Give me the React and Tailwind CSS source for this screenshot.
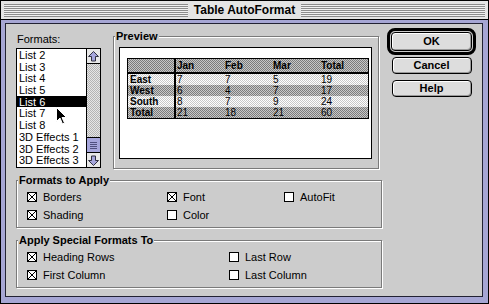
import React from 'react'

const darkDither = "bg-[image:repeating-conic-gradient(#7c7c7c_0%_25%,#c8c8c8_0%_50%)] bg-[length:2px_2px]"
const lightDither = "bg-[image:repeating-conic-gradient(#ffffff_0%_25%,#c8c8c8_0%_50%)] bg-[length:2px_2px]"
const trackDither = "bg-[image:repeating-conic-gradient(#b4b4b4_0%_25%,#e6e6e6_0%_50%)] bg-[length:2px_2px]"
const stripes = "bg-[image:repeating-linear-gradient(to_bottom,#8c8c8c_0px,#8c8c8c_1px,#f0f0f0_1px,#f0f0f0_2px)]"

const formats = ["List 2", "List 3", "List 4", "List 5", "List 6", "List 7", "List 8", "3D Effects 1", "3D Effects 2", "3D Effects 3"]

function ArrowBox({ down }) {
    return (
        <div className="h-[14px] bg-[#e8e8e8] flex items-center justify-center">
            <svg width="11" height="11" viewBox="0 0 11 11" className={down ? "rotate-180" : ""}>
                <path d="M5.5 0.5 L10.5 5.5 L7.5 5.5 L7.5 10 L3.5 10 L3.5 5.5 L0.5 5.5 Z" fill="#a6a6dc" stroke="#303040" strokeWidth="1" />
            </svg>
        </div>
    )
}

function Scrollbar() {
    return (
        <div className="w-[14px] border-l border-black flex flex-col">
            <ArrowBox />
            <div className={`flex-1 border-t border-black ${trackDither}`} />
            <div className="h-[16px] border-y border-black bg-[#a6a6dc] flex flex-col items-center justify-center gap-[1px]">
                <div className="w-[7px] h-px bg-[#505080]" />
                <div className="w-[7px] h-px bg-[#505080]" />
                <div className="w-[7px] h-px bg-[#505080]" />
                <div className="w-[7px] h-px bg-[#505080]" />
            </div>
            <ArrowBox down />
        </div>
    )
}

function FormatList() {
    return (
        <div className="relative w-[85px] h-[120px] border border-black bg-white flex">
            <div className="flex-1 overflow-hidden">
                {formats.map(f => (
                    <div key={f} className={`h-[11.7px] leading-[12px] pl-[2px] text-[11px] ${f === "List 6" ? "bg-black text-white" : ""}`}>{f}</div>
                ))}
            </div>
            <Scrollbar />
            {/* mouse pointer */}
            <svg className="absolute left-[39px] top-[58px]" width="12" height="18" viewBox="0 0 12 18">
                <path d="M0.5 0.5 L0.5 14.5 L4 11 L6.5 17 L8.5 16 L6 10.5 L10.5 10.5 Z" fill="#000" stroke="#fff" strokeWidth="1" />
            </svg>
        </div>
    )
}

function PreviewTable() {
    const head = ["Jan", "Feb", "Mar", "Total"]
    const rows = [
        ["East", "7", "7", "5", "19"],
        ["West", "6", "4", "7", "17"],
        ["South", "8", "7", "9", "24"],
        ["Total", "21", "18", "21", "60"],
    ]
    return (
        <div className="w-[242px] border border-black text-[10px] text-black">
            <div className={`flex h-[15px] border-b-2 border-black ${darkDither}`}>
                <div className="w-[48px] border-r-2 border-black" />
                {head.map(h => <div key={h} className="w-[48px] pl-[1px] leading-[13px] font-bold">{h}</div>)}
            </div>
            {rows.map((r, i) => (
                <div key={r[0]} className={`flex h-[11px] leading-[12px] ${i % 2 ? darkDither : lightDither}`}>
                    <div className="w-[48px] border-r-2 border-black pl-[2px] font-bold">{r[0]}</div>
                    {r.slice(1).map((c, j) => <div key={j} className="w-[48px] pl-[1px]">{c}</div>)}
                </div>
            ))}
        </div>
    )
}

function Group({ label, className, children }) {
    return (
        <div className={`relative border border-[#7a7a7a] shadow-[inset_1px_1px_0_#ffffff,1px_1px_0_#ffffff] ${className}`}>
            <div className="absolute left-[1px] top-[-7px] px-px bg-[#cccccc] text-[11px] leading-[12px] font-bold">{label}</div>
            {children}
        </div>
    )
}

function Check({ checked, label }) {
    return (
        <div className="flex items-center h-[12px]">
            <div className="w-[10px] h-[10px] border border-black bg-white">
                {checked && (
                    <svg width="8" height="8" viewBox="0 0 8 8">
                        <path d="M0 0 L8 8 M8 0 L0 8" stroke="#000" strokeWidth="1" />
                    </svg>
                )}
            </div>
            <span className="ml-[6px] text-[11px] leading-[12px]">{label}</span>
        </div>
    )
}

function Btn({ label, className }) {
    return (
        <div className={`border border-black rounded-[4px] bg-[#dddddd] shadow-[inset_1px_1px_0_#ffffff,inset_-1px_-1px_0_#999999] flex items-center justify-center text-[11px] font-bold ${className}`}>
            {label}
        </div>
    )
}

export default function App() {
    return (
        <div className="w-[489px] h-[304px] border border-black flex flex-col bg-[#a6a6d4] text-black font-['Liberation_Sans',Arial,sans-serif]">
            {/* title bar */}
            <div className="h-[19px] border-b border-black bg-[#e4e4e4] flex items-center px-[3px]">
                <div className={`flex-1 h-[13px] ${stripes}`} />
                <div className="px-[6px] text-[12px] font-bold leading-[14px]">Table AutoFormat</div>
                <div className={`flex-1 h-[13px] ${stripes}`} />
            </div>

            <div className="flex-1 flex flex-col pl-[4px] pr-[5px] pt-[3px] pb-[6px]">
                <div className="flex-1 border border-[#222233] bg-[#cccccc] flex flex-col pl-[10px]">
                    <div className="flex items-start h-[145px]">
                        <div className="w-[85px]">
                            <div className="mt-[9px] mb-[3px] h-[12px] text-[11px] leading-[12px] pl-px">Formats:</div>
                            <FormatList />
                        </div>

                        <Group label="Preview" className="ml-[12px] mt-[12px] w-[266px] h-[133px]">
                            <div className="mt-[10px] ml-[5px] w-[253px] h-[112px] border border-black bg-white pl-[7px] pt-[10px]">
                                <PreviewTable />
                            </div>
                        </Group>

                        <div className="ml-[8px] mt-[4px] w-[89px] flex flex-col items-center">
                            <div className="w-[89px] h-[27px] border-[3px] border-black rounded-[8px] p-px">
                                <Btn label="OK" className="h-full" />
                            </div>
                            <Btn label="Cancel" className="mt-[2px] w-[80px] h-[17px]" />
                            <Btn label="Help" className="mt-[6px] w-[80px] h-[17px]" />
                        </div>
                    </div>

                    <Group label="Formats to Apply" className="mt-[11px] w-[366px] h-[48px]">
                        <div className="grid grid-cols-[140px_117px_1fr] gap-y-[6px] pl-[10px] pt-[10px]">
                            <Check checked label="Borders" />
                            <Check checked label="Font" />
                            <Check label="AutoFit" />
                            <Check checked label="Shading" />
                            <Check label="Color" />
                        </div>
                    </Group>

                    <Group label="Apply Special Formats To" className="mt-[12px] w-[366px] h-[48px]">
                        <div className="grid grid-cols-[202px_1fr] gap-y-[6px] pl-[10px] pt-[10px]">
                            <Check checked label="Heading Rows" />
                            <Check label="Last Row" />
                            <Check checked label="First Column" />
                            <Check label="Last Column" />
                        </div>
                    </Group>
                </div>
            </div>
        </div>
    )
}
